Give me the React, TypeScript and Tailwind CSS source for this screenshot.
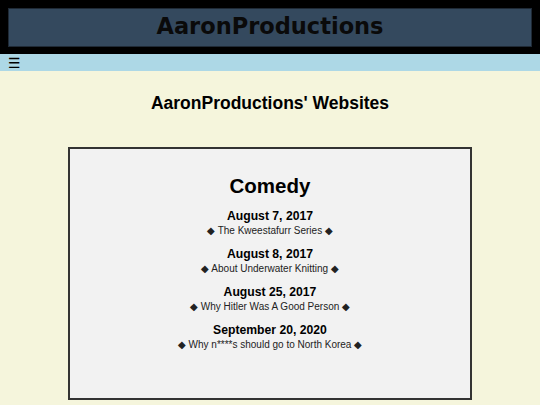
import React from "react";

type Entry = { date: string; title: string };

const entries: Entry[] = [
    { date: "August 7, 2017", title: "The Kweestafurr Series" },
    { date: "August 8, 2017", title: "About Underwater Knitting" },
    { date: "August 25, 2017", title: "Why Hitler Was A Good Person" },
    { date: "September 20, 2020", title: "Why n****s should go to North Korea" },
];

export default function App() {
    return (
        <div className="min-h-screen bg-[#f5f5dc] font-['Liberation_Sans',Arial,sans-serif] text-black">
            {/* site header */}
            <header className="bg-black px-[8px] pt-[8px] pb-[7px]">
                <div className="flex h-[39px] items-center justify-center border border-[#1f2a36] bg-[#34495e] pb-[2px]">
                    <h1 className="font-['DejaVu_Sans',Verdana,sans-serif] text-[22.5px] font-bold leading-none text-[#0a0a0a]">
                        AaronProductions
                    </h1>
                </div>
            </header>

            {/* nav toggle bar */}
            <nav className="flex h-[17px] items-center bg-[#add8e6] px-[8px]">
                <span className="font-['DejaVu_Sans',sans-serif] text-[14px] leading-none">☰</span>
            </nav>

            <h2 className="mt-[22px] text-center text-[17.5px] font-bold leading-[21px]">
                AaronProductions' Websites
            </h2>

            <section className="mx-[68px] mt-[33px] h-[253px] border-2 border-[#333] bg-[#f2f2f2] pt-[24px] text-center">
                <h3 className="text-[20.5px] font-bold leading-[26px]">Comedy</h3>
                <div className="mt-[9px] flex flex-col gap-[9px]">
                    {entries.map((e) => (
                        <div key={e.date}>
                            <div className="text-[12.2px] font-bold leading-[16px]">{e.date}</div>
                            <div className="text-[10px] leading-[13px] text-[#222]">
                                ◆ {e.title} ◆
                            </div>
                        </div>
                    ))}
                </div>
            </section>
        </div>
    );
}
